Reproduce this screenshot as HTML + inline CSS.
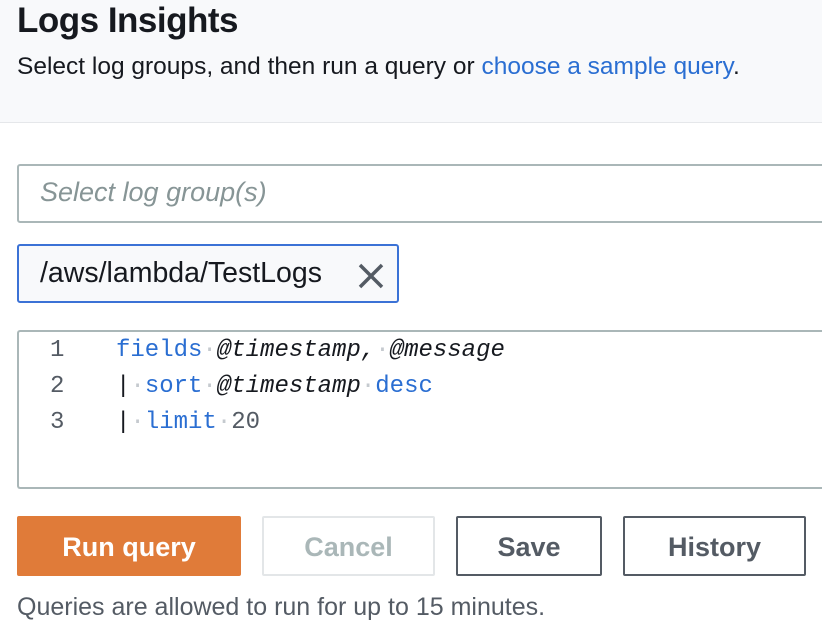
<!DOCTYPE html>
<html><head><style>
body{margin:0;width:822px;height:628px;overflow:hidden;background:#fff;font-family:"Liberation Sans",sans-serif;color:#16191f;position:relative}
.hdr{position:absolute;left:0;top:0;width:822px;height:122px;background:#f8f9fb;border-bottom:1px solid #e5e7ea}
h1{position:absolute;left:17px;top:1px;margin:0;font-size:35px;font-weight:bold;letter-spacing:-0.5px}
.sub{position:absolute;left:17px;top:53px;font-size:24.5px;white-space:nowrap}
.sub a{color:#2a6ed2;text-decoration:none}
.box{position:absolute;box-sizing:border-box;border-radius:3px}
.inp{left:17px;top:164px;width:820px;height:59px;border:2px solid #aab7b8;color:#879596;font-style:italic;font-size:27px;padding:11px 0 0 21px}
.tag{left:17px;top:244px;width:382px;height:59px;border:2px solid #3b72d6;background:#f8f9fb;font-size:28.5px;padding:11px 0 0 21px;white-space:nowrap}
.tag svg{position:absolute;left:338px;top:16px}
.ed{left:17px;top:330px;width:820px;height:159px;border:2px solid #aab7b8;border-right:none;font-family:"Liberation Mono",monospace;font-size:24px}
.ln{position:absolute;left:31px;color:#545b64}
.code{position:absolute;left:97px;white-space:pre}
.k{color:#2a6ed2}.i{font-style:italic}.n{color:#545b64}.d{color:#c5cacf}
.btn{position:absolute;box-sizing:border-box;top:516px;height:60px;border-radius:2px;font-size:27px;font-weight:bold;text-align:center;line-height:58px}
.foot{position:absolute;left:17px;top:593px;font-size:25px;color:#545b64;white-space:nowrap}
</style></head><body>
<div class="hdr"></div>
<h1>Logs Insights</h1>
<div class="sub">Select log groups, and then run a query or <a>choose a sample query</a>.</div>
<div class="box inp">Select log group(s)</div>
<div class="box tag">/aws/lambda/TestLogs<svg width="28" height="28" viewBox="0 0 28 28"><path d="M3 3L25 25M25 3L3 25" stroke="#545b64" stroke-width="3.5"/></svg></div>
<div class="box ed">
<div class="ln" style="top:5px">1</div><div class="ln" style="top:41px">2</div><div class="ln" style="top:77px">3</div>
<div class="code" style="top:5px"><span class="k">fields</span><span class="d">·</span><span class="i">@timestamp,</span><span class="d">·</span><span class="i">@message</span></div>
<div class="code" style="top:41px">|<span class="d">·</span><span class="k">sort</span><span class="d">·</span><span class="i">@timestamp</span><span class="d">·</span><span class="k">desc</span></div>
<div class="code" style="top:77px">|<span class="d">·</span><span class="k">limit</span><span class="d">·</span><span class="n">20</span></div>
</div>
<div class="btn" style="left:17px;width:224px;background:#e07b39;color:#fff;border:2px solid #e07b39">Run query</div>
<div class="btn" style="left:262px;width:173px;border:2px solid #e3e6e8;color:#aab7b8">Cancel</div>
<div class="btn" style="left:456px;width:146px;border:2px solid #545b64;color:#545b64">Save</div>
<div class="btn" style="left:623px;width:183px;border:2px solid #545b64;color:#545b64">History</div>
<div class="foot">Queries are allowed to run for up to 15 minutes.</div>
</body></html>
